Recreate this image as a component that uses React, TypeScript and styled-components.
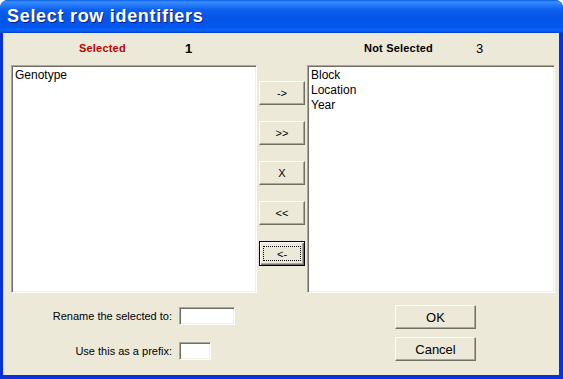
import styled, { createGlobalStyle, css } from "styled-components";

const GlobalStyle = createGlobalStyle`
    html, body {
        margin: 0;
        padding: 0;
        background: #ffffff;
    }
    body {
        font-family: "Liberation Sans", Arial, sans-serif;
    }
`;

const Window = styled.div`
    width: 563px;
    height: 379px;
    display: flex;
    flex-direction: column;
    box-sizing: border-box;
    background: #0831d9;
    border-radius: 8px 8px 0 0;
    overflow: hidden;
`;

const TitleBar = styled.div`
    height: 33px;
    flex: none;
    display: flex;
    align-items: center;
    padding-left: 7px;
    background: linear-gradient(
        to bottom,
        #0a5fe8 0%,
        #3c8ffe 6%,
        #2a80fb 12%,
        #0d5fee 30%,
        #0355e8 55%,
        #0357ec 80%,
        #0660f6 90%,
        #0a5ff0 94%,
        #003ccc 100%
    );
`;

const Title = styled.span`
    font-family: "Liberation Sans", Arial, sans-serif;
    font-weight: bold;
    font-size: 18px;
    color: #ffffff;
    text-shadow: 1px 1px 0 #0a1f8c;
    letter-spacing: 0.7px;
`;

const Body = styled.div`
    flex: 1;
    margin: 0 4px 4px 3px;
    background: #ece9d8;
    display: flex;
    flex-direction: column;
    padding: 7px 4px 0 8px;
    box-shadow: inset 1px 0 0 #c9d6f5;
`;

const HeaderRow = styled.div`
    display: grid;
    grid-template-columns: 246px 50px 248px;
    height: 17px;
    margin-bottom: 8px;
`;

const HeaderCell = styled.div`
    position: relative;
    font-size: 11px;
    font-weight: bold;
    line-height: 17px;
`;

const HeaderLabel = styled.span<{ $red?: boolean; $x: number }>`
    position: absolute;
    left: ${(p) => p.$x}px;
    letter-spacing: 0.2px;
    color: ${(p) => (p.$red ? "#c00000" : "#000000")};
`;

const Count = styled.span<{ $x: number; $bold?: boolean }>`
    position: absolute;
    left: ${(p) => p.$x}px;
    font-size: 13px;
    font-weight: ${(p) => (p.$bold ? "bold" : "normal")};
    color: #000;
`;

const MainRow = styled.div`
    display: grid;
    grid-template-columns: 246px 50px 248px;
    height: 228px;
`;

const sunken = css`
    box-sizing: border-box;
    background: #ffffff;
    border-top: 1px solid #aca899;
    border-left: 1px solid #aca899;
    border-right: 1px solid #ffffff;
    border-bottom: 1px solid #ffffff;
    box-shadow: inset 1px 1px 0 #716f64, inset -1px -1px 0 #f1efe2;
`;

const ListBox = styled.div`
    ${sunken};
    padding: 2px 3px;
    display: flex;
    flex-direction: column;
`;

const ListItem = styled.div`
    font-size: 12px;
    line-height: 15px;
    color: #000;
`;

const ButtonColumn = styled.div`
    display: flex;
    flex-direction: column;
    align-items: center;
    gap: 16px;
    padding-top: 16px;
`;

const MoveButton = styled.button<{ $focused?: boolean }>`
    width: 46px;
    height: 24px;
    padding: 0;
    box-sizing: border-box;
    font-family: "Liberation Sans", Arial, sans-serif;
    font-size: 11px;
    color: #000;
    background: #ece9d8;
    border-top: 1px solid #ffffff;
    border-left: 1px solid #ffffff;
    border-right: 1px solid #716f64;
    border-bottom: 1px solid #716f64;
    box-shadow: inset -1px -1px 0 #aca899;
    display: flex;
    align-items: center;
    justify-content: center;
    ${(p) =>
        p.$focused &&
        css`
            height: 25px;
            border: 1px solid #000;
            box-shadow: inset 1px 1px 0 #ffffff, inset -1px -1px 0 #716f64,
                inset -2px -2px 0 #aca899;
        `}
`;

const FocusRing = styled.span`
    display: flex;
    align-items: center;
    justify-content: center;
    width: 38px;
    height: 15px;
    border: 1px dotted #000;
    box-sizing: border-box;
`;

const BottomRow = styled.div`
    display: grid;
    grid-template-columns: 246px 50px 248px;
    padding-top: 12px;
`;

const Form = styled.div`
    display: grid;
    grid-template-columns: 161px auto;
    column-gap: 7px;
    row-gap: 14px;
    align-items: center;
`;

const FieldLabel = styled.label`
    font-size: 11px;
    text-align: right;
    color: #000;
`;

const Field = styled.div<{ $w: number }>`
    ${sunken};
    width: ${(p) => p.$w}px;
    height: 18px;
`;

const DialogButtons = styled.div`
    grid-column: 3;
    display: flex;
    flex-direction: column;
    gap: 8px;
    padding-left: 88px;
`;

const DialogButton = styled.button`
    width: 81px;
    height: 24px;
    padding: 0;
    box-sizing: border-box;
    font-family: "Liberation Sans", Arial, sans-serif;
    font-size: 13px;
    color: #000;
    background: #ece9d8;
    border-top: 1px solid #ffffff;
    border-left: 1px solid #ffffff;
    border-right: 1px solid #716f64;
    border-bottom: 1px solid #716f64;
    box-shadow: inset -1px -1px 0 #aca899;
`;

const selected = ["Genotype"];
const notSelected = ["Block", "Location", "Year"];
const moves = ["->", ">>", "X", "<<"];

export default function App() {
    return (
        <>
            <GlobalStyle />
            <Window>
                <TitleBar>
                    <Title>Select row identifiers</Title>
                </TitleBar>
                <Body>
                    <HeaderRow>
                        <HeaderCell>
                            <HeaderLabel $red $x={68}>
                                Selected
                            </HeaderLabel>
                            <Count $x={174} $bold>
                                {selected.length}
                            </Count>
                        </HeaderCell>
                        <div />
                        <HeaderCell>
                            <HeaderLabel $x={57}>Not Selected</HeaderLabel>
                            <Count $x={169}>{notSelected.length}</Count>
                        </HeaderCell>
                    </HeaderRow>
                    <MainRow>
                        <ListBox>
                            {selected.map((s) => (
                                <ListItem key={s}>{s}</ListItem>
                            ))}
                        </ListBox>
                        <ButtonColumn>
                            {moves.map((m) => (
                                <MoveButton key={m}>{m}</MoveButton>
                            ))}
                            <MoveButton $focused>
                                <FocusRing>{"<-"}</FocusRing>
                            </MoveButton>
                        </ButtonColumn>
                        <ListBox>
                            {notSelected.map((s) => (
                                <ListItem key={s}>{s}</ListItem>
                            ))}
                        </ListBox>
                    </MainRow>
                    <BottomRow>
                        <Form>
                            <FieldLabel>Rename the selected to:</FieldLabel>
                            <Field $w={56} />
                            <FieldLabel>Use this as a prefix:</FieldLabel>
                            <Field $w={32} />
                        </Form>
                        <DialogButtons>
                            <DialogButton>OK</DialogButton>
                            <DialogButton>Cancel</DialogButton>
                        </DialogButtons>
                    </BottomRow>
                </Body>
            </Window>
        </>
    );
}
